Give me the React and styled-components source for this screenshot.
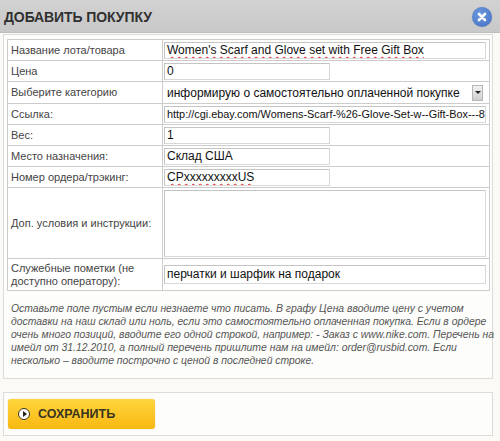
import React from "react";
import styled, { createGlobalStyle } from "styled-components";

const Global = createGlobalStyle`
  html, body { margin: 0; padding: 0; background: #fbfaf6; }
  body { font-family: "Liberation Sans", Arial, sans-serif; }
`;

const Dialog = styled.div`
  width: 500px;
  height: 441px;
  background: #fbfaf6;
  overflow: hidden;
`;

const Header = styled.div`
  height: 33px;
  background: linear-gradient(#d2d2d2, #c8c8c8);
  border-bottom: 1px solid #bdbdbd;
  box-sizing: border-box;
  display: flex;
  align-items: center;
  justify-content: space-between;
  padding: 0 8px 0 4px;
`;

const Title = styled.h1`
  margin: 0;
  font-size: 14px;
  font-weight: bold;
  color: #303030;
  letter-spacing: -0.1px;
  padding-top: 1px;
`;

const Close = styled.button`
  width: 20px;
  height: 20px;
  border-radius: 50%;
  border: none;
  padding: 0;
  margin-top: 2px;
  background: radial-gradient(circle at 40% 35%, #6f9ae0, #3f6cc0);
  display: flex;
  align-items: center;
  justify-content: center;
  box-shadow: 0 0 1px rgba(0,0,0,0.3);
`;

const Panel = styled.div`
  margin: ${p => p.$top}px 7px 0 3px;
  border: 1px solid #dedcd6;
  background: #fdfdfb;
  padding: ${p => p.$pad};
`;

const Table = styled.table`
  width: 100%;
  table-layout: fixed;
  border-collapse: collapse;
  border: 1px solid #c9c9c9;
  background: #ffffff;
`;

const LabelCol = styled.col`
  width: 155px;
`;

const Row = styled.tr`
  height: ${p => p.$h || 21}px;
`;

const Label = styled.td`
  border: 1px solid #cccccc;
  padding: 0 3px;
  font-size: 11px;
  line-height: 13px;
  color: #444;
  vertical-align: middle;
`;

const Cell = styled.td`
  border: 1px solid #cccccc;
  padding: 0 3px 0 1px;
  vertical-align: middle;
`;

const Field = styled.div`
  box-sizing: border-box;
  width: ${p => (p.$short ? "166px" : "100%")};
  height: ${p => p.$h || 17}px;
  border: 1px solid #c4c4c4;
  border-right-color: #d8d8d8;
  border-bottom-color: #d8d8d8;
  background: #fff;
  font-size: ${p => p.$size || 12}px;
  line-height: ${p => (p.$h ? p.$h - 2 : 15)}px;
  color: #111;
  padding: 0 2px;
  white-space: nowrap;
  overflow: hidden;
`;

const Select = styled.div`
  box-sizing: border-box;
  height: 19px;
  display: flex;
  align-items: center;
  justify-content: space-between;
  font-size: 12px;
  color: #111;
  padding: 0 3px 0 3px;
  white-space: nowrap;
`;

const Arrow = styled.span`
  width: 11px;
  height: 16px;
  box-sizing: border-box;
  border: 1px solid #b5b5b5;
  background: linear-gradient(#f2f2f2, #cfcfcf);
  display: flex;
  align-items: center;
  justify-content: center;
  &::after {
    content: "";
    border-left: 3px solid transparent;
    border-right: 3px solid transparent;
    border-top: 3px solid #222;
  }
`;

const Squig = styled.span`
  text-decoration: underline wavy #e02020;
  text-decoration-thickness: 1px;
  text-underline-offset: 2px;
`;

const Notes = styled.p`
  margin: 11px 2px 11px 4px;
  font-size: 10.4px;
  line-height: 13px;
  font-style: italic;
  color: #555;
  white-space: nowrap;
`;

const SaveButton = styled.button`
  width: 147px;
  height: 30px;
  border: none;
  border-radius: 3px;
  background: linear-gradient(#ffd53d, #f8b812);
  display: flex;
  align-items: center;
  gap: 8px;
  padding: 0 0 0 10px;
  font-family: "Liberation Sans", Arial, sans-serif;
  font-size: 12.5px;
  font-weight: bold;
  color: #3a3320;
  box-shadow: 0 0 1px rgba(150, 110, 0, 0.5);
`;

const PlayIcon = styled.span`
  width: 10px;
  height: 10px;
  border-radius: 50%;
  border: 1.5px solid #3a3320;
  background: #fff;
  display: flex;
  align-items: center;
  justify-content: center;
  box-sizing: content-box;
  &::after {
    content: "";
    margin-left: 2px;
    border-top: 3px solid transparent;
    border-bottom: 3px solid transparent;
    border-left: 4px solid #222;
  }
`;

export default function App() {
  return (
    <>
      <Global />
      <Dialog>
        <Header>
          <Title>ДОБАВИТЬ ПОКУПКУ</Title>
          <Close aria-label="close">
            <svg width="10" height="10" viewBox="0 0 10 10">
              <path d="M2 2 L8 8 M8 2 L2 8" stroke="#fff" strokeWidth="2.6" strokeLinecap="round" />
            </svg>
          </Close>
        </Header>
        <Panel $top={1} $pad="4px 2px 0 3px">
          <Table>
            <colgroup>
              <LabelCol />
              <col />
            </colgroup>
            <tbody>
              <Row>
                <Label>Название лота/товара</Label>
                <Cell><Field><Squig>Women's Scarf and Glove set with Free Gift Box</Squig></Field></Cell>
              </Row>
              <Row>
                <Label>Цена</Label>
                <Cell><Field $short>0</Field></Cell>
              </Row>
              <Row $h={22}>
                <Label>Выберите категорию</Label>
                <Cell><Select>информирую о самостоятельно оплаченной покупке<Arrow /></Select></Cell>
              </Row>
              <Row>
                <Label>Ссылка:</Label>
                <Cell><Field $size={10.9}>http://cgi.ebay.com/Womens-Scarf-%26-Glove-Set-w--Gift-Box---8</Field></Cell>
              </Row>
              <Row>
                <Label>Вес:</Label>
                <Cell><Field $short>1</Field></Cell>
              </Row>
              <Row>
                <Label>Место назначения:</Label>
                <Cell><Field $short>Склад США</Field></Cell>
              </Row>
              <Row>
                <Label>Номер ордера/трэкинг:</Label>
                <Cell><Field $short><Squig>CPxxxxxxxxxUS</Squig></Field></Cell>
              </Row>
              <Row $h={71}>
                <Label>Доп. условия и инструкции:</Label>
                <Cell><Field $h={67} /></Cell>
              </Row>
              <Row $h={32}>
                <Label>Служебные пометки (не доступно оператору):</Label>
                <Cell><Field $h={19}>перчатки и шарфик на подарок</Field></Cell>
              </Row>
            </tbody>
          </Table>
          <Notes>
            Оставьте поле пустым если незнаете что писать. В графу Цена вводите цену с учетом<br />
            доставки на наш склад или ноль, если это самостоятельно оплаченная покупка. Если в ордере<br />
            очень много позиций, вводите его одной строкой, например: - Заказ с www.nike.com. Перечень на<br />
            имейл от 31.12.2010, а полный перечень пришлите нам на имейл: order@rusbid.com. Если<br />
            несколько – вводите построчно с ценой в последней строке.
          </Notes>
        </Panel>
        <Panel $top={13} $pad="6px 4px">
          <SaveButton><PlayIcon />СОХРАНИТЬ</SaveButton>
        </Panel>
      </Dialog>
    </>
  );
}
